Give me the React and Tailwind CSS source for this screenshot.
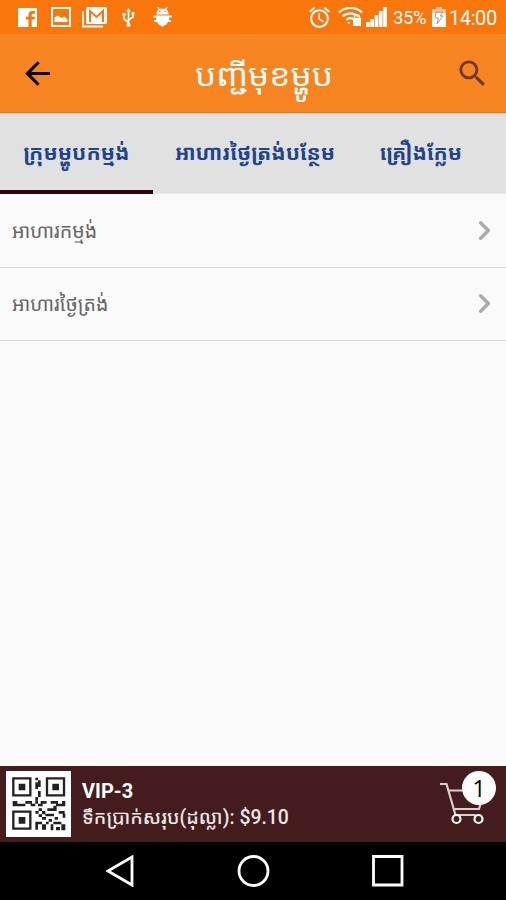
import { ChevronRight } from 'lucide-react';
import { MdArrowBack, MdSearch, MdAlarm } from 'react-icons/md';

const TABS = [
  { label: 'ក្រុមម្ហូបកម្មង់', width: 'w-[153px]', active: true },
  { label: 'អាហារថ្ងៃត្រង់បន្ថែម', width: 'w-[204px]' },
  { label: 'គ្រឿងក្លែម', width: 'w-[128px]' },
];

const CATEGORIES = ['អាហារកម្មង់', 'អាហារថ្ងៃត្រង់'];

const KHMER = "font-['Roboto','Noto_Sans_Khmer','Khmer_OS','Noto_Sans',sans-serif]";

function StatusBar() {
  return (
    <div className="flex h-[34px] items-center justify-between bg-[#f8760b] text-white">
      <div className="flex items-center pl-[18px]">
        <svg width="19" height="19" viewBox="0 0 19 19">
          <path d="M0 0h19v19H0z" fill="#fff" />
          <path d="M10.500 19v-7.500H8V8.800h2.500V7c0-2.600 1.400-4 3.700-4H17v2.700h-1.700c-1.200 0-1.600.4-1.600 1.400v1.700H17l-.4 2.700h-2.900V19z" fill="#f8760b" />
        </svg>
        <svg className="ml-[14px]" width="20" height="20" viewBox="0 0 20 20" fill="currentColor">
          <path fillRule="evenodd" d="M0 0h20v20H0zM2 2v16h16V2zM3.500 15V10.500l3-2 4 2.500 3-1.500 3 3V15z" />
        </svg>
        <svg className="ml-[11px]" width="26" height="21" viewBox="0 0 26 21" fill="none">
          <path d="M1 4v15.500h20" stroke="#fff" strokeWidth="1.800" />
          <rect x="4" y="0" width="21" height="17" rx="2" fill="#fff" />
          <path d="M8 15V4l6.500 6L21 4v11" stroke="#f8760b" strokeWidth="2" />
        </svg>
        <svg className="ml-[14px]" width="13" height="19" viewBox="0 0 13 19" fill="none" stroke="currentColor" strokeWidth="1.700">
          <path d="M6.500 2v15M6.500 14.500L2 11V6.500M6.500 12L11 9V5" />
          <path d="M6.500 0l2.500 3.500H4z" fill="#fff" stroke="none" />
          <path d="M9.500 4h3v3h-3z" fill="#fff" stroke="none" />
          <circle cx="2" cy="6.500" r="1.800" fill="#fff" stroke="none" />
          <circle cx="6.500" cy="17" r="2" fill="#fff" stroke="none" />
        </svg>
        <svg className="ml-[18px]" width="19" height="20" viewBox="0 0 19 20" fill="currentColor">
          <path d="M3.500 7.500C3.500 5 4.300 3.500 5.500 2.500L4.300.6l.8-.6 1.500 1.800h5.800L13.900 0l.8.6-1.200 1.900c1.200 1 2 2.500 2 5z" />
          <path d="M0 8.500h19v2h-3V13h2v2h-3c-1 2-2 3-3.500 3.300L9.500 20l-2-1.700C6 18 5 17 4 15H1v-2h2v-2.500H0z" />
          <path d="M6 4.500h1.500M11.500 4.500H13" stroke="#f8760b" />
        </svg>
      </div>
      <div className="flex items-center pr-[9px]">
        <MdAlarm size={25} />
        <svg className="ml-[6px]" width="26" height="20" viewBox="0 0 26 20" fill="none" stroke="currentColor" strokeWidth="2.200">
          <path d="M1 5.500c6.500-6 16.500-6 23 0M4.500 9.500c4.500-4.300 11.500-4.300 16 0M8.500 13c2.500-2.300 4.500-2.300 7-1" />
          <path d="M11 17.500L9 15h3z" fill="#fff" stroke="none" />
          <path d="M15 11h8v8h-8z" fill="#fff" stroke="none" />
          <path d="M16.500 12V9.500c0-2.500 5-2.500 5 0V12" strokeWidth="1.400" />
        </svg>
        <svg className="ml-[2px]" width="21" height="20" viewBox="0 0 21 20" fill="currentColor">
          <path d="M0 15h3.700v5H0zM4.300 12H8v8H4.300zM8.600 8h3.700v12H8.600zM12.900 4h3.700v16h-3.700zM17.200 0h3.700v20h-3.700z" />
        </svg>
        <span className="ml-[6px] w-[34px] pt-[2px] font-['Roboto',sans-serif] text-[18.5px] leading-none tracking-[-0.4px] whitespace-nowrap">35%</span>
        <svg className="ml-[5px]" width="14" height="20" viewBox="0 0 14 20">
          <path d="M4 0h6v2h4v5H0V2h4z" fill="#fbc49a" />
          <path d="M0 6h14v14H0z" fill="#fff" />
          <path d="M4 5h7l-3 4h3l-6 8 1.500-6H3z" fill="none" stroke="#a59b94" />
        </svg>
        <span className="ml-[3px] w-[48px] pt-[2px] font-['Roboto',sans-serif] text-[20px] leading-none tracking-[-0.4px] whitespace-nowrap">14:00</span>
      </div>
    </div>
  );
}

function Header() {
  return (
    <header className="flex h-[79px] items-center justify-between border-b border-[#f8760b] bg-[#f68420] pr-[16px] pl-[19px]">
      <MdArrowBack size={37} className="text-black" />
      <h1 className={`${KHMER} ml-[16px] scale-x-108 pt-[4px] text-[31px] leading-none whitespace-nowrap text-white`}>
        បញ្ជីមុខម្ហូប
      </h1>
      <MdSearch size={35} className="text-[#6b3810]" />
    </header>
  );
}

function Tabs() {
  return (
    <nav className="flex h-[81px] border-b border-[#e8e8e8] bg-[#e1e1e1]">
      {TABS.map((tab) => (
        <button
          key={tab.label}
          className={`${KHMER} ${tab.width} flex h-[81px] items-center justify-center border-b-4 pt-[4px] text-[21px] font-bold whitespace-nowrap text-[#1d448c] ${
            tab.active ? 'border-[#2e060a]' : 'border-transparent'
          }`}
        >
          {tab.label}
        </button>
      ))}
    </nav>
  );
}

function QrCode() {
  return (
    <svg width="65" height="66" viewBox="0 0 195 198" className="bg-white">
      <g fill="none" stroke="#222" strokeWidth="7">
        <path d="M22 22h51v51H22zM123 22h51v51h-51zM22 122h51v51H22z" />
      </g>
      <g fill="#222">
        <path d="M38 38h20v20H38zM139 38h20v20h-20zM38 138h20v20H38z" />
        <path d="M88 20h8v8h-8zM88 34h8v20h-8zM96 28h8v20h-8zM96 60h8v18h-8zM88 78h8v10h-8z" />
        <path d="M20 90h14v8h8v8H20zM42 98h16v8H42zM58 90h20v8H58zM74 98h14v8H74zM88 88h8v10h-8zM104 90h18v8h-18zM96 98h14v8H96zM134 90h22v8h-22zM150 98h20v8h-20zM168 90h10v16h-10z" />
        <path d="M98 112h10v8H98zM108 120h10v10h-10zM88 120h10v8H88zM124 112h24v8h-24zM118 128h26v8h-26zM142 104h10v16h-10zM158 120h18v8h-18zM170 128h8v12h-8zM98 130h10v8H98z" />
        <path d="M108 138h12v8h-12zM128 144h10v8h-10zM146 138h10v8h-10zM88 152h8v24h-8zM96 152h12v8H96zM108 160h12v16h-12zM120 152h8v8h-8zM134 160h8v18h-8zM142 152h24v8h-24zM150 168h12v10h-12zM166 160h12v18h-12z" />
      </g>
    </svg>
  );
}

function CartIcon() {
  return (
    <svg width="46" height="44" viewBox="0 0 46 44" fill="none" stroke="#d9cfcf" strokeWidth="2.200">
      <path d="M0 2h6.500l9 31M8 8.500h32M13.500 27h25.500l3-10M15.500 33h20" />
      <circle cx="16.500" cy="37" r="4" stroke="#fff" />
      <circle cx="38.500" cy="37" r="4" stroke="#fff" />
    </svg>
  );
}

function OrderBar() {
  return (
    <footer className="flex h-[76px] items-center bg-[#441c1e] pr-[20px] pl-[6px] text-white">
      <QrCode />
      <div className="ml-[11px] flex flex-1 flex-col">
        <span className="font-['Roboto',sans-serif] text-[20px] leading-[26px] font-bold">VIP-3</span>
        <span className={`${KHMER} text-[19.4px] leading-[27px] font-medium whitespace-nowrap text-[#eee7e6]`}>
          ទឹកប្រាក់សរុប(ដុល្លា): $9.10
        </span>
      </div>
      <div className="relative">
        <CartIcon />
        <span className="absolute -top-[11px] left-[22px] flex h-[34px] w-[34px] items-center justify-center rounded-full bg-white font-['Open_Sans',sans-serif] text-[23px] leading-none text-black">
          1
        </span>
      </div>
    </footer>
  );
}

function NavBar() {
  return (
    <div className="flex h-[58px] items-center bg-black pl-[106px]">
      <svg width="298" height="32" viewBox="0 0 298 32" fill="none" stroke="#fff" strokeWidth="2.800">
        <path d="M26 2v28L2 16z" />
        <circle cx="147.500" cy="16" r="14.500" />
        <path d="M267.500 1.500h28.500v28.500h-28.500z" />
      </svg>
    </div>
  );
}

export default function App() {
  return (
    <div className="flex h-[900px] w-[506px] flex-col overflow-hidden bg-[#fafafa]">
      <StatusBar />
      <Header />
      <Tabs />
      <main className="flex-1">
        {CATEGORIES.map((name) => (
          <div key={name} className="flex h-[73.5px] items-center justify-between border-b border-[#d9d9d9] pr-[6px] pl-[12px]">
            <span className={`${KHMER} pt-[2px] text-[19.6px] whitespace-nowrap text-[#666]`}>{name}</span>
            <ChevronRight size={31} strokeWidth={2.6} className="text-[#aaa]" />
          </div>
        ))}
      </main>
      <OrderBar />
      <NavBar />
    </div>
  );
}
